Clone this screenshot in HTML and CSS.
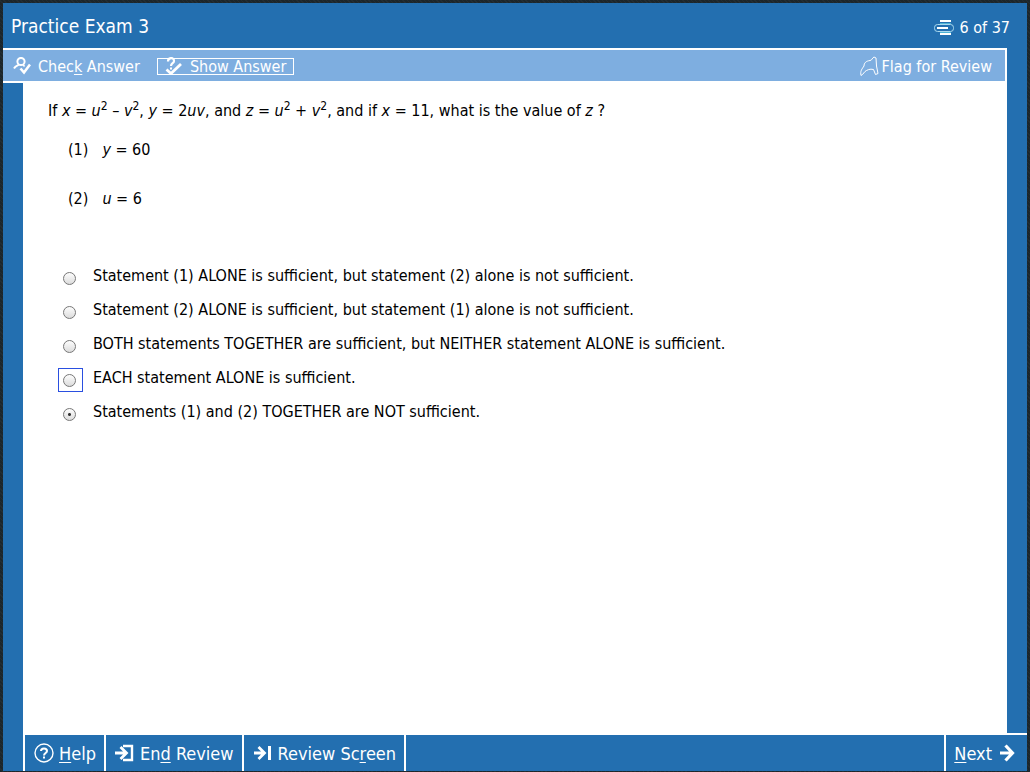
FILE: index.html
```html
<!DOCTYPE html>
<html lang="en">
<head>
    <meta charset="UTF-8">
    <meta name="viewport" content="width=device-width, initial-scale=1.0">
    <title>Practice Exam 3</title>
    <link rel="stylesheet" href="styles.css">
</head>
<body>

<div class="app">
    <header class="header">
        <h1>Practice Exam 3</h1>
        <div class="progress">
            <svg width="20" height="16" viewBox="0 0 20 16" fill="none">
                <path d="M6 1h11M6 14h11" stroke="#fff" stroke-width="2"/>
                <path d="M6 3.5h11M6 12.5h11" stroke="#4db3d6" stroke-width="1"/>
                <rect x="0.5" y="4.5" width="19" height="7" rx="3" stroke="#a9d8ee"/>
                <path d="M3 8h11" stroke="#fff" stroke-width="2"/>
            </svg>
            <span>6 of 37</span>
        </div>
    </header>

    <div class="middle">
        <main class="main">
            <div class="toolbar">
                <button type="button" class="tool">
                    <svg width="18" height="18" viewBox="0 0 18 18" fill="none" stroke="#fff">
                        <circle cx="8" cy="4.5" r="3.6" stroke-width="2"/>
                        <path d="M5.5 7.500C5 9 3 8 1 11.500" stroke-width="2"/>
                        <path d="M10 7.500L11.500 9.500" stroke-width="1.600"/>
                        <path d="M7.500 11.500L11 15.500L17 7.500" stroke-width="2.600"/>
                    </svg>
                    <span>Chec<u>k</u> Answer</span>
                </button>
                <button type="button" class="tool focused">
                    <svg width="18" height="18" viewBox="0 0 18 18" fill="none" stroke="#fff">
                        <path d="M3 4.500C3 0 9 0 9 4C9 6.500 6 6 6 9" stroke-width="2.200"/>
                        <path d="M5 11.500h2" stroke-width="2"/>
                        <path d="M1.500 12.500L6 16.500L16 7" stroke-width="2.800"/>
                    </svg>
                    <span>Sh<u>o</u>w Answer</span>
                </button>
                <button type="button" class="tool flag">
                    <svg width="19" height="20" viewBox="0 0 19 20" fill="none" stroke="#fff">
                        <path d="M1 19.5C0 15 2 13 4 10C4 7 6 5 10 4.500C12 4.500 12 2 14 1L16 2L16.500 10L18 17.500L15.500 18.500L13.500 13.500C10 12.500 7 14 5 15.500L2.500 18.500Z"/>
                    </svg>
                    <span>Flag for Review</span>
                </button>
            </div>

            <form class="question">
                <p class="stem">If <i>x</i> = <i>u</i><sup>2</sup> – <i>v</i><sup>2</sup>, <i>y</i> = 2<i>uv</i>, and <i>z</i> = <i>u</i><sup>2</sup> + <i>v</i><sup>2</sup>, and if <i>x</i> = 11, what is the value of <i>z</i> ?</p>
                <div class="statements">
                    <p><span>(1)</span><span><i>y</i> = 60</span></p>
                    <p><span>(2)</span><span><i>u</i> = 6</span></p>
                </div>
                <div class="choices">
                    <label class="choice">
                        <span class="mark"><input type="radio" name="answer" value="a"></span>
                        <span>Statement (1) ALONE is sufficient, but statement (2) alone is not sufficient.</span>
                    </label>
                    <label class="choice">
                        <span class="mark"><input type="radio" name="answer" value="b"></span>
                        <span>Statement (2) ALONE is sufficient, but statement (1) alone is not sufficient.</span>
                    </label>
                    <label class="choice">
                        <span class="mark"><input type="radio" name="answer" value="c"></span>
                        <span>BOTH statements TOGETHER are sufficient, but NEITHER statement ALONE is sufficient.</span>
                    </label>
                    <label class="choice">
                        <span class="mark active"><input type="radio" name="answer" value="d"></span>
                        <span>EACH statement ALONE is sufficient.</span>
                    </label>
                    <label class="choice">
                        <span class="mark"><input type="radio" name="answer" value="e" checked></span>
                        <span>Statements (1) and (2) TOGETHER are NOT sufficient.</span>
                    </label>
                </div>
            </form>
        </main>
        <div class="rail"></div>
    </div>

    <footer class="footer">
        <button type="button" class="nav">
            <svg width="20" height="20" viewBox="0 0 20 20" fill="none" stroke="#fff">
                <circle cx="10" cy="10" r="9" stroke-width="1.400"/>
                <path d="M7 8C7 4.500 13 4.500 13 8C13 10 10 10 10 12.500" stroke-width="2"/>
                <path d="M9 14.500h2" stroke-width="2"/>
            </svg>
            <span><u>H</u>elp</span>
        </button>
        <button type="button" class="nav">
            <svg width="20" height="18" viewBox="0 0 20 18" fill="none" stroke="#fff">
                <path d="M0 9h11M5.500 3L11.500 9L5.500 15" stroke-width="2.800"/>
                <path d="M8 2h9v14H8" stroke-width="2.400"/>
            </svg>
            <span>En<u>d</u> Review</span>
        </button>
        <button type="button" class="nav">
            <svg width="20" height="18" viewBox="0 0 20 18" fill="none" stroke="#fff">
                <path d="M1 9h10M5.500 3L11.500 9L5.500 15" stroke-width="2.800"/>
                <path d="M16.500 2v14" stroke-width="3"/>
            </svg>
            <span>Review Sc<u>r</u>een</span>
        </button>
        <button type="button" class="nav next">
            <span><u>N</u>ext</span>
            <svg width="16" height="18" viewBox="0 0 16 18" fill="none" stroke="#fff">
                <path d="M1 9h12M6.500 1.500L13.500 9L6.500 16.500" stroke-width="3.200"/>
            </svg>
        </button>
    </footer>
</div>

</body>
</html>
```
FILE: styles.css
```css
:root {
    --blue: #236fb0;
    --light-blue: #7eaee0;
    --desk: #1c262b;
}

* {
    box-sizing: border-box;
}

body {
    margin: 0;
    padding: 3px 3px 1px;
    height: 100vh;
    background: repeating-linear-gradient(45deg, var(--desk) 0 2px, #232d32 2px 3px);
    font-family: "DejaVu Sans Condensed", "DejaVu Sans", Tahoma, sans-serif;
    font-stretch: condensed;
    font-size: 16px;
    color: #000;
}

h1, p {
    margin: 0;
    font-weight: normal;
}

button {
    font: inherit;
    color: #fff;
    background: none;
    border: 0;
    padding: 0;
    cursor: pointer;
}

svg {
    flex: none;
}

u {
    text-underline-offset: 2px;
}

.app {
    display: flex;
    flex-direction: column;
    height: 100%;
    background: var(--blue);
}

/* title bar */
.header {
    display: flex;
    justify-content: space-between;
    align-items: center;
    height: 45px;
    padding: 0 17px 0 8px;
    color: #fff;
}

.header h1 {
    font-size: 19px;
}

.progress {
    display: flex;
    align-items: center;
    gap: 6px;
    padding-top: 4px;
}

.middle {
    flex: 1;
    display: flex;
}

.main {
    flex: 1;
    display: flex;
    flex-direction: column;
}

.rail {
    width: 20px;
    border-bottom: 2px solid #fff;
}

.toolbar {
    display: flex;
    align-items: center;
    gap: 17px;
    height: 35px;
    padding: 1px 13px 0 10px;
    background: var(--light-blue);
    border: solid #fff;
    border-width: 2px 2px 2px 0;
}

.tool {
    display: flex;
    align-items: center;
    gap: 7px;
    height: 17px;
    line-height: 17px;
}

.focused {
    padding: 0 8px;
    outline: 1px solid #fff;
    outline-offset: -1px;
}

.flag {
    gap: 3px;
    margin-left: auto;
}

/* question area */
.question {
    flex: 1;
    margin-left: 20px;
    padding: 18px 25px;
    background: #fff;
    line-height: 20px;
}

.question sup {
    font-size: 12px;
    line-height: 0;
}

.statements {
    display: grid;
    gap: 29px;
    padding: 19px 0 0 20px;
}

.statements p {
    display: flex;
    gap: 14px;
}

.choices {
    margin-top: 50px;
    padding-left: 10px;
}

.choice {
    display: flex;
    align-items: center;
    gap: 10px;
    height: 34px;
}

.mark {
    display: flex;
    align-items: center;
    width: 25px;
    height: 24px;
    margin-top: 4px;
    padding-left: 4px;
    border: 1px solid transparent;
}

.mark.active {
    border-color: #2a4fe0;
}

.mark input {
    appearance: none;
    width: 13px;
    height: 13px;
    margin: 0;
    border: 1px solid #777;
    border-radius: 50%;
    background: linear-gradient(#fdfdfd, #dcdcdc);
}

.mark input:checked {
    background: radial-gradient(circle, #333 0 1px, transparent 2px), linear-gradient(#fdfdfd, #dcdcdc);
}

/* bottom navigation */
.footer {
    display: flex;
    height: 36px;
    padding-left: 20px;
    font-size: 18px;
}

.nav {
    display: flex;
    align-items: center;
    gap: 5px;
    padding: 0 8px 0 9px;
    border-left: 2px solid #fff;
}

.nav:nth-child(3) {
    border-right: 2px solid #fff;
}

.next {
    gap: 7px;
    margin-left: auto;
    padding: 0 12px 0 8px;
}
```
